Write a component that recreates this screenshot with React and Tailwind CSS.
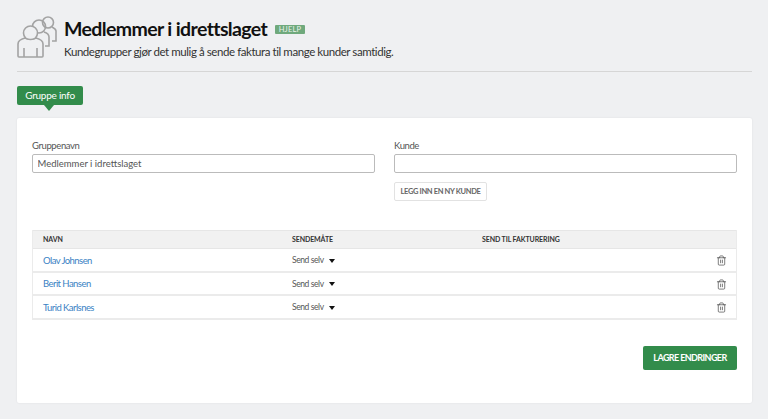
import { Trash2 } from "lucide-react";

const members = ["Olav Johnsen", "Berit Hansen", "Turid Karlsnes"];

function GroupIcon() {
  return (
    <svg width="40" height="42" viewBox="0 0 40 42" fill="none" stroke="#a3a3a3" strokeWidth="1.6" className="shrink-0">
      <circle cx="31" cy="6.500" r="5.500" />
      <path d="M35 11c2 1 4 2 4 4v10h-4" />
      <circle cx="22" cy="10.500" r="6.500" />
      <path d="M27 16c3 1 5 3 5 5v9h-4" />
      <circle cx="13.500" cy="17" r="7" fill="#eff0f2" />
      <path d="M8 22c-4 1-7 3-7 6v12c0 1 1 1 1 1h23c1 0 1-1 1-1V28c0-3-3-5-7-6-2 2-9 2-11 0z" fill="#eff0f2" />
      <path d="M7 41v-9M20 41v-9" />
    </svg>
  );
}

function MemberRow({ name }) {
  return (
    <div className="flex h-[23.500px] items-center border-b-2 border-[#ebebeb] pl-[10px] pr-[9px] pt-[2px]">
      <a className="w-[249px] text-[9.500px] tracking-[-0.55px] text-[#3a82c4]">{name}</a>
      <div className="flex w-[190px] items-center">
        <span className="text-[8.500px] tracking-[-0.4px] text-[#555]">Send selv</span>
        <span className="ml-[5px] h-0 w-0 border-x-[3.500px] border-t-[4.500px] border-x-transparent border-t-[#111]" />
      </div>
      <div className="flex flex-1 justify-end">
        <Trash2 size={11} strokeWidth={1.5} className="text-[#444]" />
      </div>
    </div>
  );
}

export default function App() {
  return (
    <div className="min-h-[419px] bg-[#eff0f2] pl-[17px] pr-[16px] pt-[16px] font-['Lato','Noto_Sans',sans-serif] text-[#222]">
      <header className="flex h-[42px] gap-[7px]">
        <GroupIcon />
        <div>
          <div className="flex h-[26px] items-center">
            <h1 className="text-[19.500px] font-bold leading-none tracking-[-0.62px] text-[#111]">Medlemmer i idrettslaget</h1>
            <span className="ml-[8px] rounded-[1px] bg-[#6fa97c] px-[3.500px] text-[7.500px] leading-[9px] tracking-[0.2px] text-[#e8f2ea]">HJELP</span>
          </div>
          <p className="mt-[1px] text-[11.500px] leading-[18px] tracking-[-0.43px] text-[#333]">
            Kundegrupper gjør det mulig å sende faktura til mange kunder samtidig.
          </p>
        </div>
      </header>

      <div className="mt-[13px] border-t border-[#d6d6d6]" />

      <div className="relative mt-[14px] flex h-[19px] w-[66px] items-center justify-center rounded-[2px] bg-[#328c4b] text-[10px] tracking-[-0.25px] text-white">
        Gruppe info
        <span className="absolute left-[27px] top-full h-0 w-0 border-x-[5px] border-t-[6px] border-x-transparent border-t-[#328c4b]" />
      </div>

      <main className="mt-[13px] h-[285px] rounded-[2px] bg-white px-[15px] pt-[21px] shadow-[0_0_2px_rgba(0,0,0,0.08)]">
        <div className="grid grid-cols-[343px_343px] gap-x-[19px]">
          <div>
            <label className="block text-[9.500px] leading-[13px] tracking-[-0.4px] text-[#555]">Gruppenavn</label>
            <input
              readOnly
              value="Medlemmer i idrettslaget"
              className="mt-[2px] block h-[19px] w-full rounded-[2px] border border-[#bbb] pl-[4.500px] pr-[4px] text-[9.500px] text-[#555]"
            />
          </div>
          <div>
            <label className="block text-[9.500px] leading-[13px] tracking-[-0.4px] text-[#555]">Kunde</label>
            <input readOnly className="mt-[2px] block h-[19px] w-full rounded-[2px] border border-[#bbb] px-[4px]" />
            <button className="mt-[9px] flex h-[19px] w-[93px] items-center justify-center whitespace-nowrap rounded-[2px] border border-[#e2e2e2] text-[7.500px] font-bold tracking-[-0.35px] text-[#666]">
              LEGG INN EN NY KUNDE
            </button>
          </div>
        </div>

        <section className="mt-[29px] border-x border-[#ebebeb]">
          <div className="flex h-[19px] items-center border-y border-[#e6e6e6] bg-[#f1f1f1] pl-[10px] text-[7px] font-bold tracking-[-0.1px] text-[#333]">
            <span className="w-[249px]">NAVN</span>
            <span className="w-[190px]">SENDEMÅTE</span>
            <span>SEND TIL FAKTURERING</span>
          </div>
          {members.map((name) => (
            <MemberRow key={name} name={name} />
          ))}
        </section>

        <div className="mt-[26px] flex justify-end">
          <button className="h-[24px] w-[94px] rounded-[2px] bg-[#328c4b] text-[9px] font-bold tracking-[-0.6px] text-white">
            LAGRE ENDRINGER
          </button>
        </div>
      </main>
    </div>
  );
}
